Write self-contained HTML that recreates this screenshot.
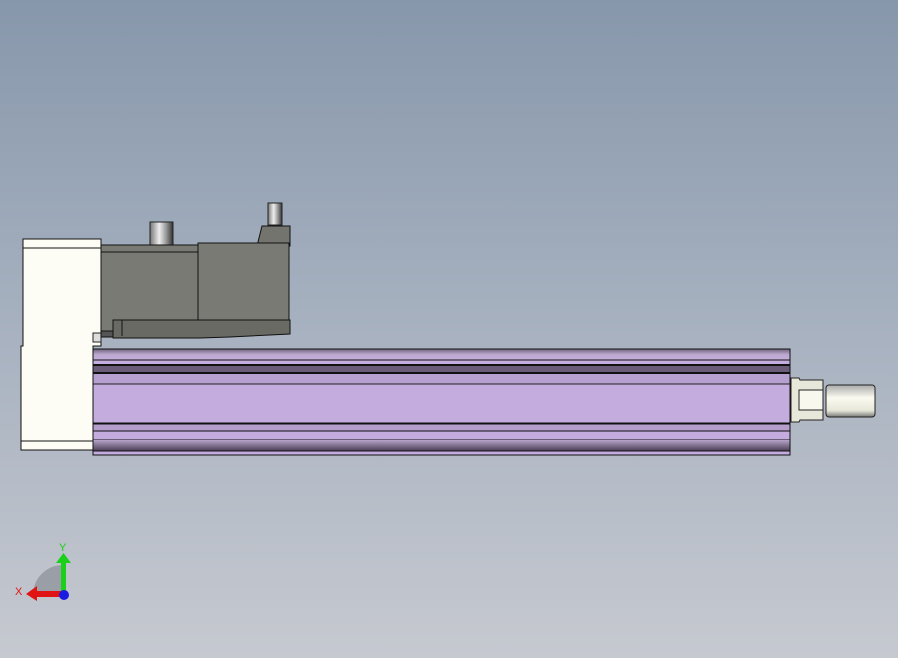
<!DOCTYPE html><html><head><style>html,body{margin:0;padding:0}body{width:898px;height:658px;overflow:hidden;background:linear-gradient(#8797ab,#a4afbe 45%,#c6c9d0)}</style></head><body>
<svg width="898" height="658" xmlns="http://www.w3.org/2000/svg" style="position:absolute;left:0;top:0">
<defs>
<linearGradient id="cyl" x1="0" x2="1"><stop offset="0" stop-color="#777"/><stop offset=".4" stop-color="#eee"/><stop offset=".7" stop-color="#999"/><stop offset="1" stop-color="#333"/></linearGradient>
<linearGradient id="rod" x1="0" y1="0" x2="0" y2="1"><stop offset="0" stop-color="#aaa"/><stop offset=".4" stop-color="#fafaf0"/><stop offset=".8" stop-color="#e6e6d8"/><stop offset="1" stop-color="#777"/></linearGradient>
<linearGradient id="pb" x1="0" y1="0" x2="0" y2="1"><stop offset="0" stop-color="#b7a4c9"/><stop offset="1" stop-color="#4a3e55"/></linearGradient>
<linearGradient id="pt" x1="0" y1="0" x2="0" y2="1"><stop offset="0" stop-color="#6e627a"/><stop offset=".5" stop-color="#bba8d0"/><stop offset="1" stop-color="#c4aedc"/></linearGradient>
</defs>
<!-- white block -->
<path d="M23 239H101V346H93V450H21V346H23Z" fill="#fdfdf6" stroke="#111" stroke-width="1"/>
<line x1="23" y1="248" x2="101" y2="248" stroke="#111"/>
<line x1="21" y1="441" x2="93" y2="441" stroke="#111"/>
<rect x="93" y="333" width="8" height="9" fill="#ddd" stroke="#222"/>
<!-- motor -->
<rect x="150" y="222" width="23" height="23" fill="url(#cyl)" stroke="#222"/>
<rect x="268" y="203" width="14" height="22" fill="url(#cyl)" stroke="#222"/>
<path d="M262 226H290V246H257Z" fill="#74746e" stroke="#111"/>
<rect x="101" y="245" width="97" height="90" fill="#7a7a74" stroke="#111"/>
<line x1="101" y1="252" x2="198" y2="252" stroke="#111"/>
<rect x="198" y="243" width="91" height="82" fill="#7a7a74" stroke="#111"/>
<path d="M113 320H290V334L230 337L200 338H113Z" fill="#6a6a64" stroke="#111"/>
<line x1="122" y1="320" x2="122" y2="336" stroke="#111"/>
<rect x="101" y="331" width="12" height="6" fill="#555" stroke="#111"/>
<!-- tube -->
<rect x="93" y="349" width="697" height="106" fill="#c5acdf" stroke="#111"/>
<rect x="93" y="349" width="697" height="11" fill="url(#pt)"/>
<rect x="93" y="365" width="697" height="8" fill="#6a5b78"/>
<rect x="93" y="373" width="697" height="11" fill="#b6a0d0"/>
<line x1="93" y1="360" x2="790" y2="360" stroke="#111"/>
<line x1="93" y1="365" x2="790" y2="365" stroke="#111" stroke-width="2"/>
<line x1="93" y1="373" x2="790" y2="373" stroke="#111" stroke-width="2"/>
<line x1="93" y1="384" x2="790" y2="384" stroke="#222"/>
<rect x="93" y="424" width="697" height="7" fill="#b59ece"/>
<line x1="93" y1="423.5" x2="790" y2="423.5" stroke="#111" stroke-width="2"/>
<line x1="93" y1="431" x2="790" y2="431" stroke="#111"/>
<line x1="93" y1="440" x2="790" y2="440" stroke="#111"/>
<rect x="93" y="440" width="697" height="11" fill="url(#pb)"/>
<line x1="93" y1="451" x2="790" y2="451" stroke="#111"/>
<rect x="93" y="349" width="697" height="106" fill="none" stroke="#111"/>
<!-- rod end -->
<path d="M791 378H799L800 380H823V420H800L799 422H791Z" fill="#e8e8da" stroke="#222"/>
<rect x="799" y="390" width="24" height="20" fill="#f8f8ee" stroke="#222"/>
<rect x="826" y="385" width="49" height="32" rx="3" fill="url(#rod)" stroke="#222"/>
<!-- triad -->
<path d="M63 595V565A30 30 0 0 0 33 595Z" fill="#9a9ea6"/>
<rect x="61" y="562" width="5" height="33" fill="#1ad01a"/>
<path d="M56 563L63.5 553L71 563Z" fill="#1ad01a"/>
<rect x="36" y="591" width="27" height="6" fill="#e01414"/>
<path d="M37 586L26 594L37 601Z" fill="#e01414"/>
<circle cx="64" cy="595" r="5" fill="#1a1ae0"/>
<text x="59" y="551" font-family="Liberation Sans,sans-serif" font-size="11" fill="#1ad01a">Y</text>
<text x="15" y="595" font-family="Liberation Sans,sans-serif" font-size="11" fill="#e01414">X</text>
</svg>
</body></html>
